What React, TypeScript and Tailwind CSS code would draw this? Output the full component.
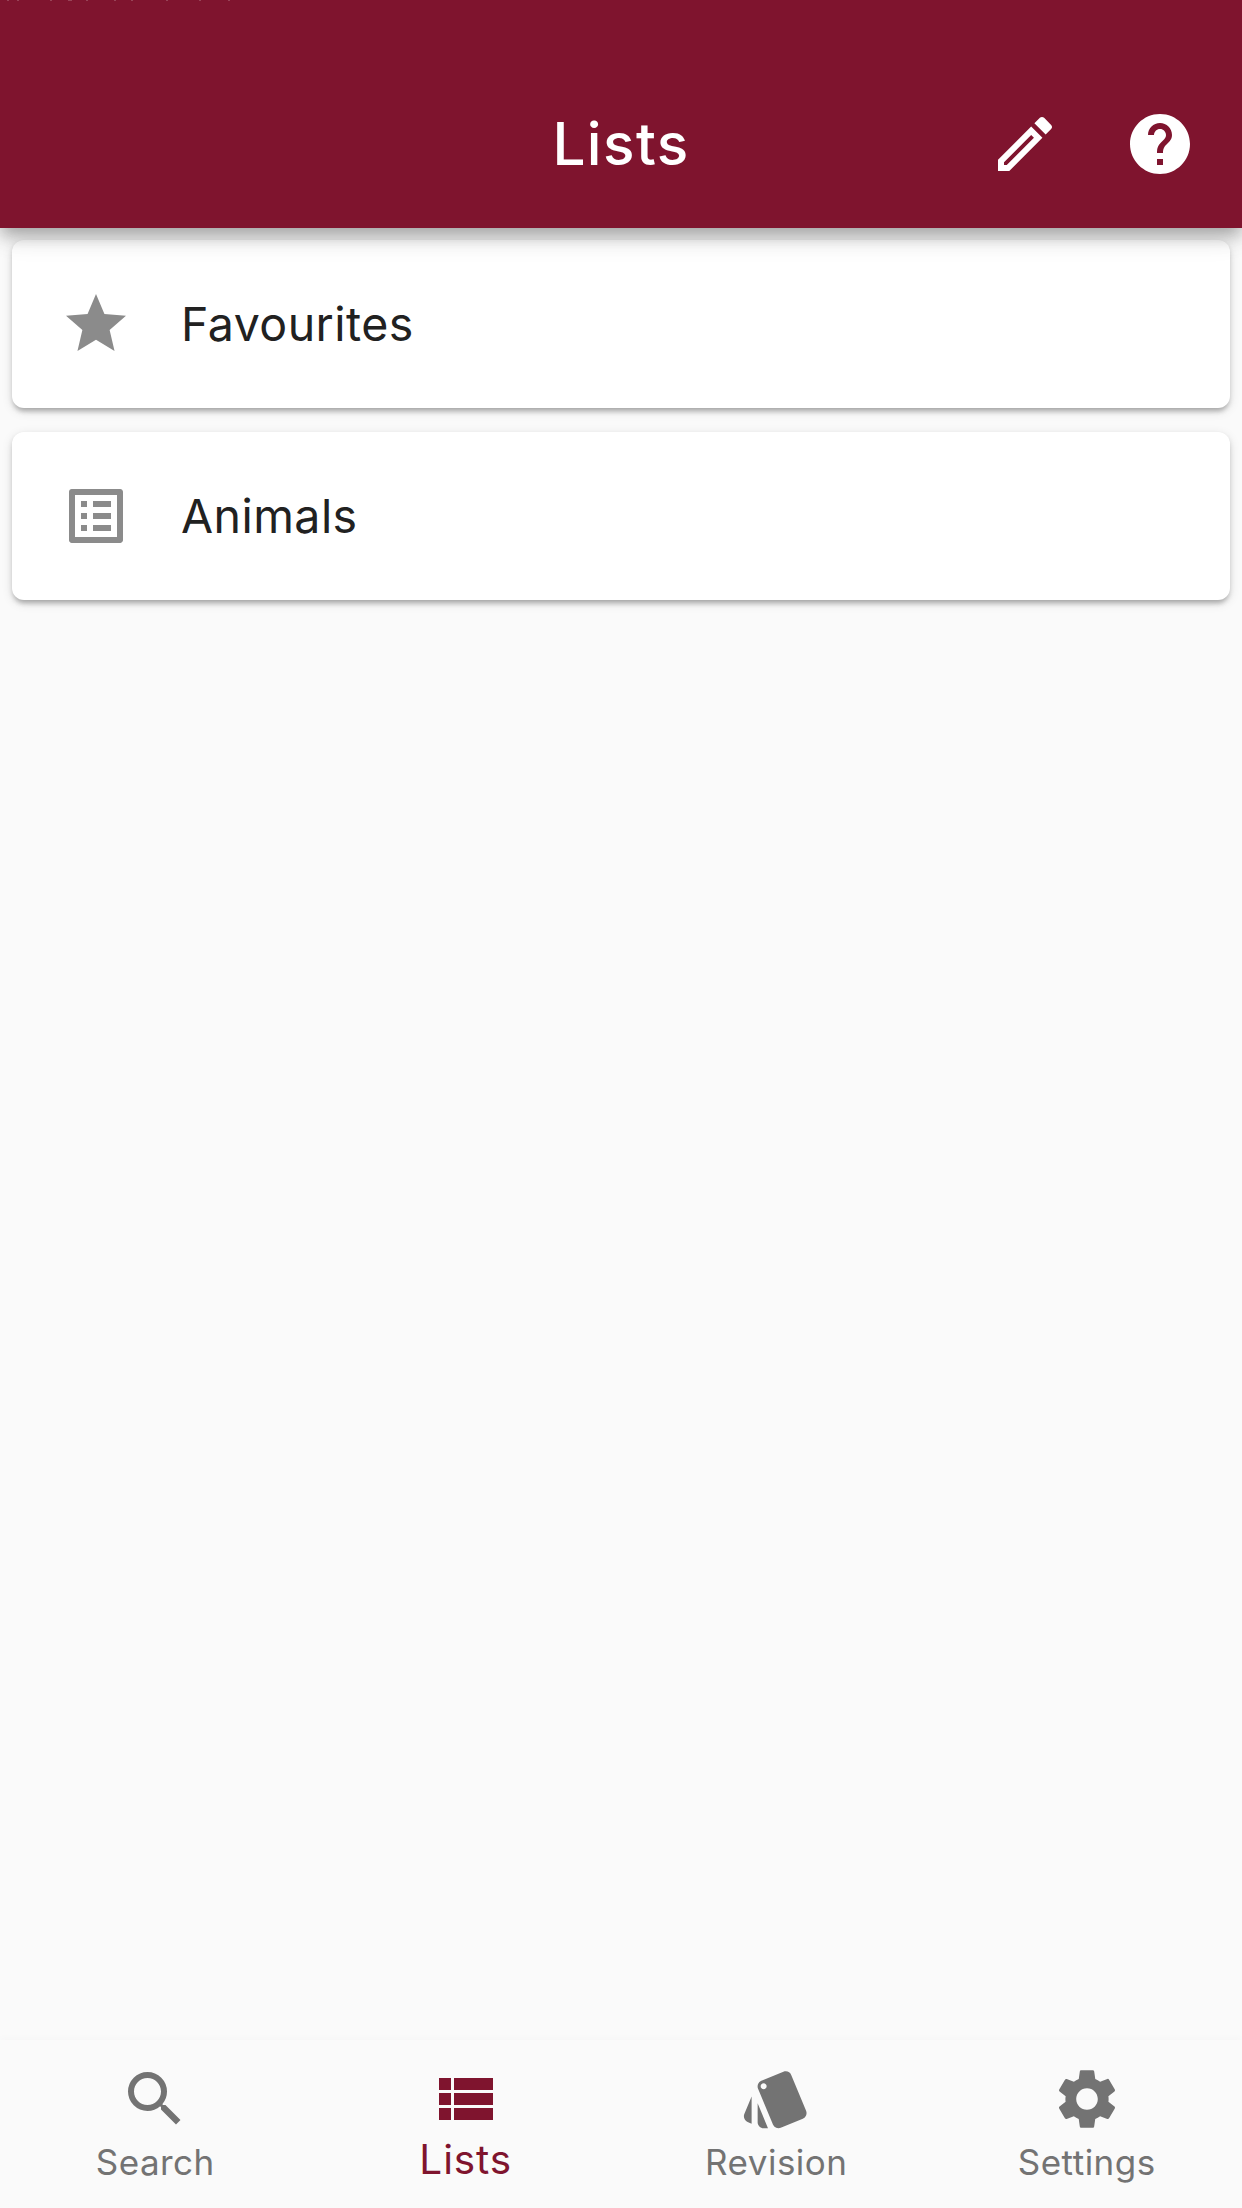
import type { ReactNode } from "react";
import { MdSearch, MdSettings, MdStar, MdStyle, MdHelp } from "react-icons/md";

const font = "font-['Inter','Liberation_Sans',sans-serif]";

function Glyph({ d }: { d: string }) {
  return (
    <svg viewBox="0 0 24 24" fill="currentColor" fillRule="evenodd" className="size-[72px] shrink-0">
      <path d={d} />
    </svg>
  );
}

const pencil =
  "M3 17.25V21h3.75L17.81 9.94l-3.75-3.75L3 17.25zM5.92 19H5v-.92l9.06-9.06.92.92L5.92 19zM20.71 7.04c.39-.39.39-1.02 0-1.41l-2.34-2.34c-.39-.39-1.02-.39-1.41 0l-1.83 1.83 3.75 3.75 1.83-1.83z";
const listBox =
  "M19 5v14H5V5h14m1.1-2H3.9c-.5 0-.9.4-.9.9v16.2c0 .4.4.9.9.9h16.2c.4 0 .9-.5.9-.9V3.9c0-.5-.5-.9-.9-.9zM11 7h6v2h-6V7zm0 4h6v2h-6v-2zm0 4h6v2h-6zM7 7h2v2H7zm0 4h2v2H7zm0 4h2v2H7z";
const viewList =
  "M3 14h4v-4H3v4zm0 5h4v-4H3v4zM3 9h4V5H3v4zm5 5h13v-4H8v4zm0 5h13v-4H8v4zM8 5v4h13V5H8z";

function Card({ icon, label }: { icon: ReactNode; label: string }) {
  return (
    <div className="mx-3 flex h-[168px] items-center rounded-xl bg-white pl-12 shadow-[0_6px_5px_-3px_rgba(0,0,0,0.17),0_3px_5px_rgba(0,0,0,0.12),0_3px_11px_rgba(0,0,0,0.12)]">
      <span className="text-[#8b8b8b]">{icon}</span>
      <span className="ml-[49px] text-[46.5px] leading-[62px] tracking-[0.45px] text-[#212121]">{label}</span>
    </div>
  );
}

function Tab({ icon, label, active = false }: { icon: ReactNode; label: string; active?: boolean }) {
  return (
    <div
      className={
        active
          ? "flex flex-1 flex-col items-center pt-[23px] text-[#7f142e]"
          : "flex flex-1 flex-col items-center pt-[23px] text-[#737373]"
      }
    >
      {icon}
      <span
        className={
          active
            ? "text-[40.5px] leading-[50px] tracking-[0.9px]"
            : "mt-[5px] text-[35px] leading-[44px] tracking-[0.5px]"
        }
      >
        {label}
      </span>
    </div>
  );
}

export default function App() {
  return (
    <div className={`${font} flex h-[2208px] w-[1242px] flex-col overflow-hidden bg-[#fafafa]`}>
      <header className="relative z-10 grid h-[228px] shrink-0 grid-cols-[1fr_auto_1fr] items-center bg-[#7f142e] pt-[60px] text-white shadow-[0_8px_14px_-3px_rgba(0,0,0,0.2),0_12px_17px_rgba(0,0,0,0.13),0_3px_33px_rgba(0,0,0,0.1)]">
        <svg className="absolute top-0 left-0 h-px w-[240px]" viewBox="0 0 240 1" fill="#fff" fillOpacity="0.2">
          {[7, 17, 50, 68, 86, 114, 131, 166, 199, 228].map((x) => (
            <rect key={x} x={x} width={x === 68 ? 4 : 2} height="1" />
          ))}
        </svg>
        <span />
        <h1 className="text-[58.5px] leading-[72px] font-medium tracking-[1.4px]">Lists</h1>
        <div className="flex justify-end gap-[63px] pr-[46px]">
          <Glyph d={pencil} />
          <MdHelp className="size-[72px]" />
        </div>
      </header>
      <main className="flex flex-1 flex-col gap-6 pt-3">
        <Card icon={<MdStar className="size-[72px]" />} label="Favourites" />
        <Card icon={<Glyph d={listBox} />} label="Animals" />
      </main>
      <nav className="flex h-[168px] shrink-0 bg-[#fafafa] shadow-[0_-3px_6px_rgba(0,0,0,0.015)]">
        <Tab icon={<MdSearch className="size-[72px]" />} label="Search" />
        <Tab icon={<Glyph d={viewList} />} label="Lists" active />
        <Tab icon={<MdStyle className="size-[72px]" />} label="Revision" />
        <Tab icon={<MdSettings className="size-[72px]" />} label="Settings" />
      </nav>
    </div>
  );
}
